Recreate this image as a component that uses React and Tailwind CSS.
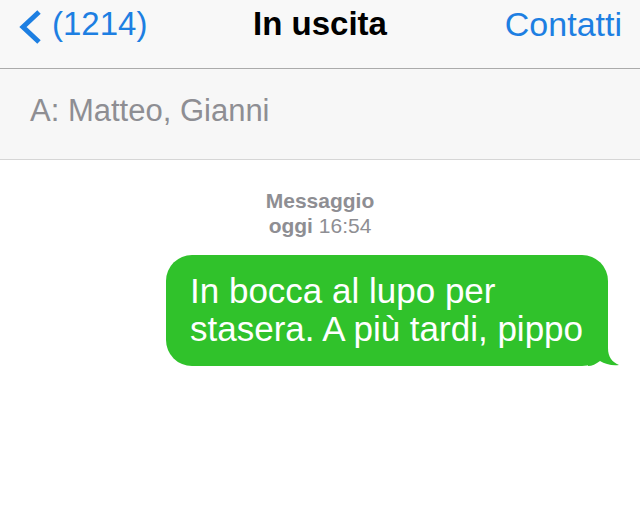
export default function App() {
  return (
    <div className="w-[640px] h-[524px] bg-white font-['Liberation_Sans',Arial,sans-serif] overflow-hidden">
      {/* nav bar */}
      <div className="h-[69px] bg-[#f8f8f8] border-b border-[#ababab] grid grid-cols-[1fr_auto_1fr] items-start pt-[7px]">
        <div className="flex items-start pl-[17px] text-[#1d7fe2]">
          <svg width="26" height="36" viewBox="0 0 26 36" className="mt-[2px]">
            <path d="M22 3 L6 18 L22 33" fill="none" stroke="#1d7fe2" strokeWidth="5" strokeLinecap="butt" strokeLinejoin="miter" />
          </svg>
          <span className="ml-[9px] text-[33px] leading-none">(1214)</span>
        </div>
        <div className="text-[33px] font-bold text-black leading-none">In uscita</div>
        <div className="flex justify-end pr-[18px] text-[34px] text-[#1d7fe2] leading-none">Contatti</div>
      </div>

      {/* recipients */}
      <div className="h-[91px] bg-[#f7f7f7] border-b border-[#d6d6d6] flex items-center pl-[30px] pb-[8px]">
        <span className="text-[31px] text-[#8e8e93] leading-none">A: Matteo, Gianni</span>
      </div>

      {/* conversation */}
      <div className="flex flex-col items-center pt-[28px] text-[#8e8e93] text-[21px] leading-[25px]">
        <div className="font-bold">Messaggio</div>
        <div>
          <span className="font-bold">oggi</span> 16:54
        </div>
      </div>

      <div className="flex justify-end pr-[32px] pt-[17px]">
        <div className="relative w-[442px] bg-[#30c22b] rounded-[26px] pl-[24px] pr-[16px] pt-[17px] pb-[18px] text-white text-[35px] leading-[38px]">
          In bocca al lupo per
          <br />
          stasera. A più tardi, pippo
          <svg width="32" height="34" viewBox="0 0 32 34" className="absolute right-[-12px] bottom-0">
            <path d="M0 0 H20 V16 C20 25 24 30 31 33 C24 34 17 32 12 29 C8 32 4 34 0 34 Z" fill="#30c22b" />
          </svg>
        </div>
      </div>
    </div>
  );
}
